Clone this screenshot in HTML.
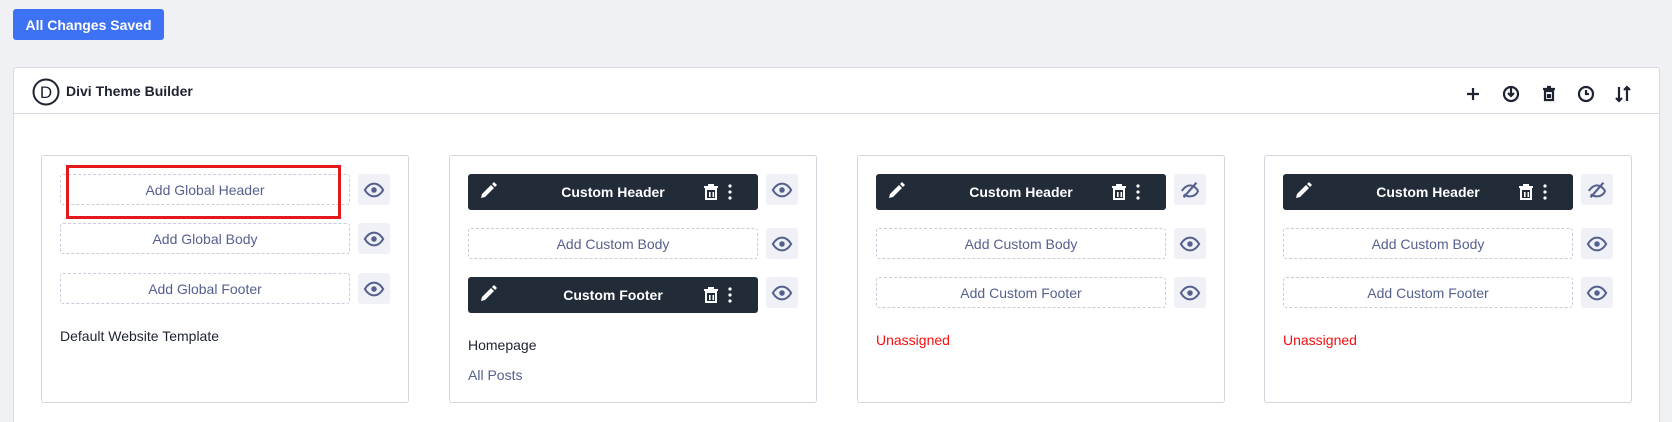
<!DOCTYPE html>
<html style="height:422px;overflow:hidden"><head><style>
*{box-sizing:border-box;margin:0;padding:0}
body{width:1672px;height:422px;background:#f0f1f5;font-family:"Liberation Sans",sans-serif;position:relative;overflow:hidden}
.a{position:absolute}
.btn{left:13px;top:9px;width:151px;height:31px;background:#3d72f5;border-radius:3px;color:#fff;font-weight:bold;font-size:14px;display:flex;align-items:center;justify-content:center}
.panel{left:13px;top:67px;width:1647px;height:355px;background:#fff;border:1px solid #d8d9e3;border-bottom:none;border-radius:3px 3px 0 0}
.hdr{left:0;top:0;right:0;height:46px;border-bottom:1px solid #d8d9e3}
.card{width:368px;height:248px;top:155px;border:1px solid #d3d5df;border-radius:3px;background:#fff}
.dash{border:1px dashed #c9ccda;border-radius:3px;color:#56608f;font-size:14px;display:flex;align-items:center;justify-content:center;width:290px;height:31px;left:18px}
.bar{background:#222b38;border-radius:3px;color:#fff;font-weight:bold;font-size:14px;display:flex;align-items:center;justify-content:center;width:290px;height:36px;left:18px}
.eye{width:32px;height:31px;left:316px;background:#f0f1f6;border-radius:3px;display:flex;align-items:center;justify-content:center}
.t{font-size:14px;color:#1d2330;left:18px}
</style></head><body>
<div class="a btn">All Changes Saved</div>
<div class="a panel">
 <div class="a hdr">
  <svg class="a" style="left:18px;top:10px" width="28" height="28"><circle cx="14" cy="14" r="12.5" fill="none" stroke="#1d2330" stroke-width="2"/><text x="14" y="20" text-anchor="middle" font-family="Liberation Sans" font-size="17" fill="#1d2330">D</text></svg>
  <div class="a" style="left:52px;top:15px;font-size:14px;font-weight:bold;color:#1d2330">Divi Theme Builder</div>
  <svg class="a" style="left:1450px;top:16px" width="200" height="20" fill="none" stroke="#1d2330" stroke-width="2.2">
   <path d="M9 4v12M3 10h12"/>
   <circle cx="47" cy="10" r="7"/><path d="M47 4v8M44 9l3 3 3-3"/>
   <path d="M79 5h12M83 3h4M81 7h8v9h-8zM84 10v4M86 10v4"/>
   <circle cx="122" cy="10" r="7"/><path d="M122 6v4h3"/>
   <path d="M155 3v14M152 14l3 3 3-3M163 17v-14M160 6l3-3 3 3"/>
  </svg>
 </div>
</div>

<svg width="0" height="0" style="position:absolute"><defs>
<symbol id="eye" viewBox="0 0 24 24"><path d="M2 12c3-5 6.5-7 10-7s7 2 10 7c-3 5-6.5 7-10 7s-7-2-10-7z" fill="none" stroke="#56608f" stroke-width="2.2"/><circle cx="12" cy="12" r="3" fill="#56608f"/></symbol>
<symbol id="eyex" viewBox="0 0 24 24"><path d="M3 13c3-4 6-6 9-6s6 2 9 6M5 17c2 1 4 2 7 2 4 0 7-2 9-6" fill="none" stroke="#56608f" stroke-width="2.2"/><path d="M19 4L5 20" stroke="#56608f" stroke-width="2.4"/></symbol>
<symbol id="ctrl" viewBox="0 0 290 36"><path d="M13 24l1-4 9-9 3 3-9 9z" fill="#fff"/><path d="M24 10l2-2 3 3-2 2z" fill="#fff"/><path d="M236 13h14M240 11h6M238 15h10v10h-10z" fill="none" stroke="#fff" stroke-width="2"/><rect x="241" y="18" width="1.6" height="5" fill="#fff"/><rect x="244.5" y="18" width="1.6" height="5" fill="#fff"/><circle cx="262" cy="12" r="1.6" fill="#fff"/><circle cx="262" cy="18" r="1.6" fill="#fff"/><circle cx="262" cy="24" r="1.6" fill="#fff"/></symbol>
</defs></svg>

<div class="a card" style="left:41px">
 <div class="a dash" style="top:18px">Add Global Header</div>
 <div class="a eye" style="top:18px"><svg width="22" height="22"><use href="#eye"/></svg></div>
 <div class="a dash" style="top:67px">Add Global Body</div>
 <div class="a eye" style="top:67px"><svg width="22" height="22"><use href="#eye"/></svg></div>
 <div class="a dash" style="top:117px">Add Global Footer</div>
 <div class="a eye" style="top:117px"><svg width="22" height="22"><use href="#eye"/></svg></div>
 <div class="a t" style="top:172px">Default Website Template</div>
 <div class="a" style="left:24px;top:9px;width:275px;height:54px;border:3px solid #e3191d"></div>
</div>
<div class="a card" style="left:449px">
 <div class="a bar" style="top:18px">Custom Header<svg class="a" style="left:0;top:0" width="290" height="36"><use href="#ctrl"/></svg></div>
 <div class="a eye" style="top:18px"><svg width="22" height="22"><use href="#eye"/></svg></div>
 <div class="a dash" style="top:72px">Add Custom Body</div>
 <div class="a eye" style="top:72px"><svg width="22" height="22"><use href="#eye"/></svg></div>
 <div class="a bar" style="top:121px">Custom Footer<svg class="a" style="left:0;top:0" width="290" height="36"><use href="#ctrl"/></svg></div>
 <div class="a eye" style="top:121px"><svg width="22" height="22"><use href="#eye"/></svg></div>
 <div class="a t" style="top:181px">Homepage</div>
 <div class="a t" style="top:211px;color:#56608f">All Posts</div>
</div>
<div class="a card" style="left:857px">
 <div class="a bar" style="top:18px">Custom Header<svg class="a" style="left:0;top:0" width="290" height="36"><use href="#ctrl"/></svg></div>
 <div class="a eye" style="top:18px"><svg width="22" height="22"><use href="#eyex"/></svg></div>
 <div class="a dash" style="top:72px">Add Custom Body</div>
 <div class="a eye" style="top:72px"><svg width="22" height="22"><use href="#eye"/></svg></div>
 <div class="a dash" style="top:121px">Add Custom Footer</div>
 <div class="a eye" style="top:121px"><svg width="22" height="22"><use href="#eye"/></svg></div>
 <div class="a t" style="top:176px;color:#f50f0f">Unassigned</div>
</div>
<div class="a card" style="left:1264px">
 <div class="a bar" style="top:18px">Custom Header<svg class="a" style="left:0;top:0" width="290" height="36"><use href="#ctrl"/></svg></div>
 <div class="a eye" style="top:18px"><svg width="22" height="22"><use href="#eyex"/></svg></div>
 <div class="a dash" style="top:72px">Add Custom Body</div>
 <div class="a eye" style="top:72px"><svg width="22" height="22"><use href="#eye"/></svg></div>
 <div class="a dash" style="top:121px">Add Custom Footer</div>
 <div class="a eye" style="top:121px"><svg width="22" height="22"><use href="#eye"/></svg></div>
 <div class="a t" style="top:176px;color:#f50f0f">Unassigned</div>
</div>
</body></html>
